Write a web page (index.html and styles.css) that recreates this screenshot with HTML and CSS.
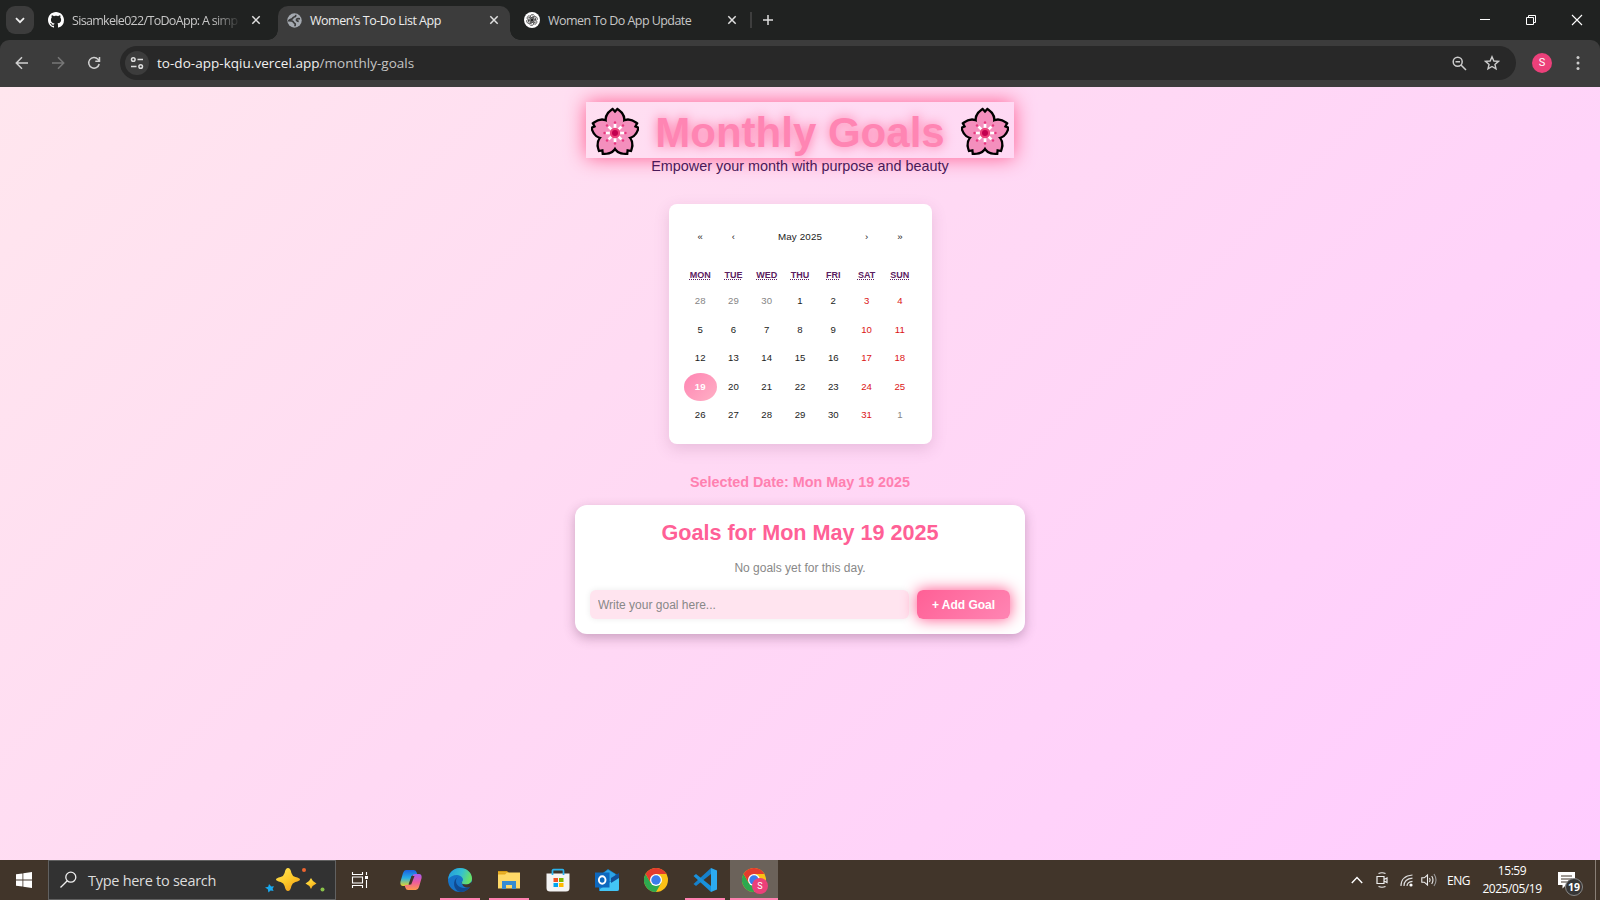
FILE: index.html
```html
<!DOCTYPE html>
<html lang="en">
<head>
<meta charset="utf-8">
<title>Women’s To-Do List App</title>
<link rel="stylesheet" href="styles.css">
</head>
<body>
<svg width="0" height="0" class="defs">
  <defs>
    <symbol id="x" viewBox="0 0 10 10"><path d="M1.3 1.3l7.4 7.4M8.7 1.3L1.3 8.7" stroke="currentColor" stroke-width="1.5" fill="none"/></symbol>
    <symbol id="chrome" viewBox="0 0 48 48">
      <circle cx="24" cy="24" r="24" fill="#fbc116"/>
      <path d="M3.200 12A24 24 0 0 0 24 48L34.400 30 24 24 13.600 30z" fill="#2da94f"/>
      <path d="M3.200 12A24 24 0 0 1 44.800 12H24L13.600 30z" fill="#e33b2e"/>
      <circle cx="24" cy="24" r="12" fill="#fff"/><circle cx="24" cy="24" r="9.500" fill="#3a7cec"/>
    </symbol>
    <path id="petal" d="M24 26L16.500 17C14.500 11 17 6.500 21.500 3.500L24 6.200 26.500 3.500C31 6.500 33.500 11 31.500 17z"/>
    <g id="petals">
      <use href="#petal"/><use href="#petal" transform="rotate(72 24 26)"/><use href="#petal" transform="rotate(144 24 26)"/>
      <use href="#petal" transform="rotate(216 24 26)"/><use href="#petal" transform="rotate(288 24 26)"/>
    </g>
    <symbol id="flower" viewBox="0 0 48 50">
      <use href="#petals" stroke="#000" stroke-width="4.600" fill="#000"/>
      <use href="#petals" fill="#f48fbd"/>
      <circle cx="24" cy="26" r="12" fill="#f48fbd"/>
      <g stroke="#fff" stroke-width="2.700"><path d="M24 17v18M15 26h18M17.600 19.600l12.800 12.800M30.400 19.600L17.600 32.400"/></g>
      <g fill="#e8387f"><circle cx="24" cy="15.500" r="1.200"/><circle cx="24" cy="36.500" r="1.200"/><circle cx="13.500" cy="26" r="1.200"/><circle cx="34.500" cy="26" r="1.200"/><circle cx="16" cy="18.500" r="1.200"/><circle cx="32" cy="18.500" r="1.200"/><circle cx="16" cy="33.500" r="1.200"/><circle cx="32" cy="33.500" r="1.200"/></g>
      <circle cx="24" cy="26" r="5.200" fill="#ec407a"/><circle cx="24" cy="26" r="3" fill="#c2004f"/>
    </symbol>
  </defs>
</svg>

<header class="tabs">
  <div class="tab-search"><svg width="10" height="7" viewBox="0 0 10 7"><path d="M1 1.200l4 4 4-4" fill="none" stroke="#eee" stroke-width="1.800"/></svg></div>
  <div class="tab tab-first">
    <svg width="16" height="16" viewBox="0 0 16 16"><path fill="#fff" d="M8 0C3.580 0 0 3.580 0 8c0 3.540 2.290 6.530 5.470 7.590.4.070.55-.17.55-.38 0-.19-.01-.82-.01-1.490-2.010.37-2.530-.49-2.690-.94-.09-.23-.48-.94-.82-1.130-.28-.15-.68-.52-.01-.53.63-.01 1.080.58 1.230.82.72 1.210 1.870.87 2.330.66.070-.52.28-.87.51-1.070-1.780-.2-3.640-.89-3.640-3.950 0-.87.31-1.590.82-2.150-.08-.2-.36-1.020.08-2.120 0 0 .67-.21 2.200.82.64-.18 1.320-.27 2-.27s1.360.09 2 .27c1.530-1.040 2.200-.82 2.200-.82.44 1.100.16 1.920.08 2.120.51.56.82 1.270.82 2.150 0 3.070-1.870 3.750-3.650 3.950.29.25.54.73.54 1.480 0 1.070-.01 1.930-.01 2.200 0 .21.15.46.55.38A8.010 8.010 0 0 0 16 8c0-4.420-3.580-8-8-8"/></svg>
    <span class="tab-title fade">Sisamkele022/ToDoApp: A simp</span>
    <svg class="close" width="10" height="10"><use href="#x"/></svg>
  </div>
  <div class="tab tab-active">
    <svg width="15" height="15" viewBox="0 0 16 16"><circle cx="8" cy="8" r="7.700" fill="#a4a9b0"/><path d="M9 2c.8 1.200 0 2.200-1.500 2.300C6 4.500 6.500 6 5 6.500S2.500 7 2 8.200c2.500 0 4.500.3 5 1.600s1.800 1 1.800 2.200-.3 1.300-.3 2M13.800 6.200c-1.500-.4-3-.4-3.600.6s.6 2 2.300 2.200" fill="none" stroke="#3c3c3c" stroke-width="1.800"/></svg>
    <span class="tab-title">Women’s To-Do List App</span>
    <svg class="close" width="10" height="10"><use href="#x"/></svg>
  </div>
  <div class="tab tab-last">
    <svg width="16" height="16" viewBox="0 0 16 16"><circle cx="8" cy="8" r="8" fill="#fff"/><g fill="none" stroke="#222" stroke-width=".7"><path id="knot" d="M6.200 7V4.800C6.200 2.300 9.300 1.800 10.500 3.600M6.200 7L8 8.100l1.900-1.100V4.900L7.700 3.700"/><use href="#knot" transform="rotate(60 8 8)"/><use href="#knot" transform="rotate(120 8 8)"/><use href="#knot" transform="rotate(180 8 8)"/><use href="#knot" transform="rotate(240 8 8)"/><use href="#knot" transform="rotate(300 8 8)"/></g></svg>
    <span class="tab-title">Women To Do App Update</span>
    <svg class="close" width="10" height="10"><use href="#x"/></svg>
  </div>
  <i class="tab-divider"></i>
  <svg class="new-tab" width="12" height="12" viewBox="0 0 12 12"><path d="M6 1v10M1 6h10" stroke="#ddd" stroke-width="1.500"/></svg>
  <div class="window-controls">
    <svg width="12" height="12" viewBox="0 0 12 12"><path d="M1 5.500h10" stroke="#fff"/></svg>
    <svg width="12" height="12" viewBox="0 0 12 12"><path d="M1.500 3.500h7v7h-7zM3.500 3V1.500h7v7H9" fill="none" stroke="#fff"/></svg>
    <svg width="12" height="12" viewBox="0 0 12 12"><path d="M1 1l10 10M11 1L1 11" stroke="#fff" stroke-width="1.100"/></svg>
  </div>
</header>

<nav class="toolbar">
  <div class="nav-buttons">
    <svg width="14" height="14" viewBox="0 0 14 14"><path d="M13 7H1.500M7 1.300L1.300 7 7 12.700" fill="none" stroke="#d0d0d0" stroke-width="1.500"/></svg>
    <svg width="14" height="14" viewBox="0 0 14 14"><path d="M1 7h11.500M7 1.300L12.700 7 7 12.700" fill="none" stroke="#777" stroke-width="1.500"/></svg>
    <svg width="14" height="14" viewBox="0 0 14 14"><path d="M12.200 8A5.300 5.300 0 1 1 11 3.300L12.500 5M12.500 1v4.200H8.300" fill="none" stroke="#d0d0d0" stroke-width="1.500"/></svg>
  </div>
  <div class="omnibox">
    <span class="site-info"><svg width="14" height="14" viewBox="0 0 14 14"><g fill="none" stroke="#ddd" stroke-width="1.500"><circle cx="3.300" cy="3.500" r="1.800"/><path d="M7.500 3.500H13M1 10.500h5.500"/><circle cx="10.700" cy="10.500" r="1.800"/></g></svg></span>
    <span class="url">to-do-app-kqiu.vercel.app<span>/monthly-goals</span></span>
    <svg class="zoom-icon" width="15" height="15" viewBox="0 0 15 15"><g fill="none" stroke="#ccc" stroke-width="1.500"><circle cx="5.700" cy="5.700" r="4.500"/><path d="M9 9l5 5M3.500 5.700H8"/></g></svg>
    <svg width="16" height="16" viewBox="0 0 16 16"><path d="M8 1.800l1.850 4.200 4.550.4-3.450 3 1.050 4.500L8 11.500l-4 2.400 1.050-4.500-3.450-3 4.550-.4z" fill="none" stroke="#ccc" stroke-width="1.400"/></svg>
  </div>
  <span class="avatar">S</span>
  <svg class="menu-dots" width="4" height="16" viewBox="0 0 4 16" fill="#ccc"><circle cx="2" cy="2.500" r="1.500"/><circle cx="2" cy="8" r="1.500"/><circle cx="2" cy="13.500" r="1.500"/></svg>
</nav>

<main class="page">
  <h1><svg width="48" height="50"><use href="#flower"/></svg><span>Monthly Goals</span><svg width="48" height="50"><use href="#flower"/></svg></h1>
  <p class="subtitle">Empower your month with purpose and beauty</p>
  <section class="calendar">
    <div class="cal-nav"><span>«</span><span>‹</span><span class="month">May 2025</span><span>›</span><span>»</span></div>
    <div class="weekdays"><abbr>MON</abbr><abbr>TUE</abbr><abbr>WED</abbr><abbr>THU</abbr><abbr>FRI</abbr><abbr>SAT</abbr><abbr>SUN</abbr></div>
    <div class="days">
      <span class="out">28</span><span class="out">29</span><span class="out">30</span><span>1</span><span>2</span><span class="we">3</span><span class="we">4</span>
      <span>5</span><span>6</span><span>7</span><span>8</span><span>9</span><span class="we">10</span><span class="we">11</span>
      <span>12</span><span>13</span><span>14</span><span>15</span><span>16</span><span class="we">17</span><span class="we">18</span>
      <span class="active">19</span><span>20</span><span>21</span><span>22</span><span>23</span><span class="we">24</span><span class="we">25</span>
      <span>26</span><span>27</span><span>28</span><span>29</span><span>30</span><span class="we">31</span><span class="out">1</span>
    </div>
  </section>
  <p class="selected">Selected Date: Mon May 19 2025</p>
  <section class="goals">
    <h2>Goals for Mon May 19 2025</h2>
    <p>No goals yet for this day.</p>
    <div class="goal-form"><input type="text" placeholder="Write your goal here..."><button>+ Add Goal</button></div>
  </section>
</main>

<footer class="taskbar">
  <div class="start"><svg width="16" height="16" viewBox="0 0 16 16" fill="#fff"><path d="M0 2.300L6.500 1.400v6.200H0zM7.300 1.200L16 0v7.600H7.300zM0 8.400h6.500v6.200L0 13.700zM7.300 8.400H16V16l-8.700-1.200z"/></svg></div>
  <div class="search">
    <svg width="18" height="18" viewBox="0 0 18 18"><g fill="none" stroke="#eee" stroke-width="1.300"><circle cx="10.800" cy="6.200" r="5"/><path d="M7.300 9.700L.5 16.500"/></g></svg>
    <span>Type here to search</span>
    <svg class="sparkles" width="62" height="26" viewBox="0 0 62 26">
      <defs><linearGradient id="gold" x2=".7" y2="1"><stop stop-color="#ffe75c"/><stop offset=".6" stop-color="#fdc828"/><stop offset="1" stop-color="#f3a01c"/></linearGradient></defs>
      <path d="M24 1q2.500 0 3.400 5 .8 3 4 4 4.600 1.100 4.600 2.500t-4.600 2.500q-3.200 1-4 4-.9 5-3.400 5t-3.400-5q-.8-3-4-4-4.600-1.100-4.600-2.500t4.600-2.500q3.200-1 4-4Q21.500 1 24 1z" fill="url(#gold)"/>
      <path d="M47 11q1.600 4 5.500 5.500-3.900 1.500-5.500 5.500-1.600-4-5.500-5.500 3.900-1.500 5.500-5.500z" fill="url(#gold)"/>
      <path d="M5 17l2.300 2.400 2.700-.2-1.400 2.600 1 2.200-3-.6-2.200 2-.6-3.200L1 20.500l3.200-.8z" fill="#18a8ee"/>
      <circle cx="40" cy="3" r="2" fill="#ef6530"/><circle cx="58.500" cy="22.500" r="2" fill="#8ac34a"/>
    </svg>
  </div>
  <div class="task-view"><svg width="17" height="16" viewBox="0 0 17 16"><path d="M1.500 0v2.500h10V0M1.500 16v-2.500h10V16M1.500 5h10v6h-10zM15.500 0v3M15.500 8v8" fill="none" stroke="#fff" stroke-width="1.100"/><path d="M14 4h3v3h-3z" fill="#fff"/></svg></div>
  <div class="apps">
    <div class="app"><svg width="24" height="24" viewBox="0 0 24 24"><defs><linearGradient id="cp1" x2="0" y2="1"><stop stop-color="#1b5fe0"/><stop offset=".5" stop-color="#27aee6"/><stop offset="1" stop-color="#e6d42b"/></linearGradient><linearGradient id="cp2" x2="0" y2="1"><stop stop-color="#a65cf0"/><stop offset=".5" stop-color="#ee5a9f"/><stop offset="1" stop-color="#ff9a4d"/></linearGradient></defs><path d="M7 2h8q2 0 2.700 2.500L18.500 7H15q-2 0-2.600 2L10.500 16Q10 18 8 18H4Q1 18 1.400 14L4 5Q5 2 7 2z" fill="url(#cp1)"/><path d="M17 22H9q-2 0-2.700-2.500L5.500 17H9q2 0 2.600-2l1.900-7Q14 6 16 6h4q3 0 2.600 4L20 19q-1 3-3 3z" fill="url(#cp2)"/><path d="M12.500 8h3l-3.300 8.500H9.500z" fill="#41352a"/></svg></div>
    <div class="app open"><svg width="24" height="24" viewBox="0 0 24 24"><defs><linearGradient id="ed" x2="1" y2=".3"><stop stop-color="#2299df"/><stop offset=".6" stop-color="#35c1cf"/><stop offset="1" stop-color="#67e06a"/></linearGradient></defs><circle cx="12" cy="12" r="12" fill="#1673c8"/><path d="M.3 11C1 4 6 0 12 0c7 0 12 5 12 10.500 0 4-3 6-6 6-4 0-5-1.500-4-2.500 3-3-1-7-5-7-4 0-7 2-8.700 4z" fill="url(#ed)"/><path d="M10 9c-4 3-2 10 5 11 3 .4 6-.5 7.500-2C20 22.500 16 24 12 24 5 22 4 12 10 9z" fill="#104a91"/><path d="M14 14c-1 1 0 2.500 4 2.500 2.500 0 4.500-1 5.600-3 .5 2 0 4-1 5.300-4 2-8.600.2-8.600-4.800z" fill="#41352a"/></svg></div>
    <div class="app open"><svg width="24" height="24" viewBox="0 0 24 24"><path d="M1 3h9l2 2H1z" fill="#d69a13"/><path d="M1 4.500h22v16H1z" fill="#ffd968"/><path d="M1 4.500h9L8 6.500H1z" fill="#e5a91e"/><path d="M5 13h14v8h-4v-4H9v4H5z" fill="#368bd2"/></svg></div>
    <div class="app"><svg width="24" height="24" viewBox="0 0 24 24"><path d="M.5 5.500h23V20q0 3.500-3.500 3.500H4Q.5 23.500.5 20z" fill="#f4f4f4"/><path d="M6.500 7V2.800Q6.500 1.700 7.500 1.700h9q1 0 1 1.100V7" fill="none" stroke="#2bb3ed" stroke-width="1.700"/><path d="M7.500 10H12v4H7.500z" fill="#f25022"/><path d="M13 10h4.500v4H13z" fill="#7fba00"/><path d="M7.500 15H12v4H7.500z" fill="#00a4ef"/><path d="M13 15h4.500v4H13z" fill="#ffb900"/></svg></div>
    <div class="app"><svg width="24" height="24" viewBox="0 0 24 24"><path d="M4 8l9-7 11 7v13q0 2-2 2H4z" fill="#1684cc"/><path d="M7 6l6-4 7 4v7H7z" fill="#2ca4e7"/><path d="M5 21l19-13v13q0 2-2 2H5z" fill="#43c5f5"/><path d="M16 10l8-5v5l-8 5z" fill="#124f98"/><path d="M0 4.500h14.500v15H0z" fill="#0d68be"/><ellipse cx="7.200" cy="12" rx="3.300" ry="3.700" fill="none" stroke="#fff" stroke-width="1.900"/></svg></div>
    <div class="app"><svg width="24" height="24"><use href="#chrome"/></svg></div>
    <div class="app open"><svg width="24" height="24" viewBox="0 0 24 24"><path d="M18 0l6 2.500v19L18 24z" fill="#2caaf0"/><path d="M18 0v6L3 18l-2.500-2z" fill="#1681cc"/><path d="M18 24v-6L3 6 .5 8z" fill="#1991dc"/></svg></div>
    <div class="app open current"><svg width="24" height="24"><use href="#chrome"/></svg><span class="badge">S</span></div>
  </div>
  <div class="tray">
    <svg class="chevron" width="12" height="8" viewBox="0 0 12 8"><path d="M.8 7L6 1.500 11.200 7" fill="none" stroke="#fff" stroke-width="1.400"/></svg>
    <svg class="meet" width="12" height="16" viewBox="0 0 12 16"><path d="M2.500 1.500q3.500-1.500 7 0M2.500 14.500q3.500 1.500 7 0M1 4.500h7v7H1zM8 7.500L11 6v4.500L8 9" fill="none" stroke="#eee" stroke-width="1.200"/></svg>
    <svg class="wifi" width="13" height="13" viewBox="0 0 13 13"><g fill="none" stroke="#ddd" stroke-width="1.200"><path d="M1 12Q1 2 12.500 1M4 12Q4 5 12.500 4.200M7 12Q7 8 12.500 7.300"/></g><circle cx="11" cy="11" r="1.600" fill="#fff"/></svg>
    <svg class="volume" width="17" height="14" viewBox="0 0 17 14"><path d="M.8 4.800h2.500L6.500 2v10L3.300 9.200H.8zM8.500 5q1.300 2 0 4M10.700 3q2.600 4 0 8" fill="none" stroke="#eee" stroke-width="1.100"/><path d="M13 1q4 6 0 12" fill="none" stroke="#999" stroke-width="1.100"/></svg>
    <span class="lang">ENG</span>
    <div class="clock"><span>15:59</span><span>2025/05/19</span></div>
    <div class="notice"><svg width="17" height="17" viewBox="0 0 17 17"><path d="M0 0h17v13H8l-3.500 3.500V13H0z" fill="#fff"/><path d="M3 4h11M3 7h11M3 10h8" stroke="#41352a"/></svg><span>19</span></div>
  </div>
  <i class="desktop-edge"></i>
</footer>
</body>
</html>
```

FILE: styles.css
```css
* { box-sizing: border-box; }
body { margin: 0; width: 1600px; height: 900px; overflow: hidden; display: flex; flex-direction: column; background: #202221; font-family: "Liberation Sans", Arial, sans-serif; }
svg { display: block; flex: none; }
h1, h2, p { margin: 0; }
.defs { position: absolute; }

/* Browser tabs */
.tabs { height: 40px; flex: none; display: flex; background: #202221; color: #c7c7c7; font: 12.500px "Open Sans", sans-serif; }
.tab-search { width: 28px; height: 28px; margin: 6px 0 0 6px; border-radius: 9px; background: #3c3c3c; display: flex; align-items: center; justify-content: center; }
.tab { height: 34px; margin-top: 6px; padding-bottom: 6px; display: flex; align-items: center; gap: 8px; white-space: nowrap; }
.tab-first { width: 244px; padding-left: 14px; padding-right: 17px; }
.tab-title { flex: 1; letter-spacing: -.55px; line-height: 20px; padding-top: 1px; }
.tab-first .tab-title { letter-spacing: -.68px; }
.fade { -webkit-mask-image: linear-gradient(90deg, #000 82%, transparent 99%); mask-image: linear-gradient(90deg, #000 82%, transparent 99%); }
.close { color: #e0e0e0; }
.tab-active { width: 232px; padding-left: 9px; padding-right: 11px; background: #3c3c3c; border-radius: 10px 10px 0 0; color: #ededed; position: relative; }
.tab-active .tab-title { letter-spacing: -.48px; }
.tab-active::before, .tab-active::after { content: ""; position: absolute; bottom: 0; width: 10px; height: 10px; }
.tab-active::before { left: -10px; background: radial-gradient(circle at 0 0, transparent 9.500px, #3c3c3c 10px); }
.tab-active::after { right: -10px; background: radial-gradient(circle at 100% 0, transparent 9.500px, #3c3c3c 10px); }
.tab-last { width: 240px; padding-left: 14px; padding-right: 13px; }
.tab-divider { width: 2px; height: 16px; margin: 12px 0 0; background: #3e3e3e; }
.new-tab { margin: 14px 0 0 10px; }
.window-controls { margin: 14px 17px 0 auto; display: flex; gap: 34px; }

/* Toolbar */
.toolbar { height: 47px; flex: none; padding-bottom: 1px; background: #3c3c3c; border-radius: 9px 9px 0 0; display: flex; align-items: center; }
.nav-buttons { display: flex; gap: 22px; padding-left: 15px; width: 120px; }
.omnibox { width: 1396px; height: 34px; padding: 0 16px 0 5px; border-radius: 17px; background: #282828; display: flex; align-items: center; }
.site-info { width: 24px; height: 24px; border-radius: 50%; background: #3c3c3c; display: flex; align-items: center; justify-content: center; }
.url { flex: 1; margin-left: 8px; color: #f0f0f0; font: 13.500px "Open Sans", sans-serif; letter-spacing: .03px; }
.url span { color: #c4c4c4; }
.zoom-icon { margin-right: 17px; }
.avatar { width: 20px; height: 20px; margin-left: 16px; border-radius: 50%; background: #ec407a; color: #fff; font: 11px/20px Roboto, sans-serif; text-align: center; }
.menu-dots { margin-left: 24px; }

/* Monthly goals page */
.page { height: 773px; flex: none; display: flex; flex-direction: column; align-items: center; padding-top: 15px; overflow: hidden; background: linear-gradient(135deg, #ffe6ee, #ffd9f4 45%, #ffccff); }
h1 { width: 428px; height: 56px; flex: none; padding: 5px 5px 0; display: flex; justify-content: space-between; color: #ff85b3; font-size: 42px; line-height: 52px; white-space: nowrap; box-shadow: 0 0 20px #ff5c8f; text-shadow: 0 0 12px #ff6f9f; }
.subtitle { height: 46px; line-height: 17px; font-size: 14.400px; color: #4a1958; white-space: nowrap; }
.calendar { width: 263px; height: 240px; flex: none; padding: 16px 15px 14px; border-radius: 8px; background: #fff; box-shadow: 0 5px 15px rgba(130, 60, 110, .18); font-size: 9.600px; color: #222; }
.cal-nav { height: 32px; display: grid; grid-template-columns: 33.280px 33.280px 1fr 33.280px 33.280px; align-items: center; text-align: center; }
.month { font-size: 9.800px; letter-spacing: .15px; }
.weekdays { height: 31px; margin-top: 7px; display: grid; grid-template-columns: repeat(7, 1fr); align-items: center; justify-items: center; color: #5c2161; font-size: 9px; font-weight: bold; }
.weekdays abbr { text-decoration: underline dotted; text-underline-offset: 1px; }
.days { display: grid; grid-template-columns: repeat(7, 1fr); grid-auto-rows: 28.600px; margin-top: -3px; text-align: center; line-height: 28.600px; }
.out { color: #858585; }
.we { color: #db1515; }
.active { color: #fff; font-weight: bold; border-radius: 50%; background: linear-gradient(135deg, #ff85b3, #ffb0c5); }
.selected { height: 61px; flex: none; padding-top: 29px; line-height: 18px; color: #ff80b0; font-size: 14.350px; font-weight: bold; white-space: nowrap; }
.goals { width: 450px; height: 129px; flex: none; padding: 15px 15px 0; border-radius: 12px; background: #fff; box-shadow: 0 4px 12px rgba(80, 30, 70, .3); text-align: center; }
.goals h2 { color: #ff6096; font-size: 21.600px; line-height: 25px; }
.goals p { margin-top: 16px; color: #888; font-size: 12px; line-height: 15px; }
.goal-form { display: flex; gap: 8px; margin-top: 14px; }
.goal-form input { width: 319px; height: 29px; padding: 0 8px; border: 0; border-radius: 6px; background: #ffe4ef; box-shadow: 0 0 6px rgba(0, 0, 0, .08); font: 12px "Liberation Sans", Arial, sans-serif; }
.goal-form input::placeholder { color: #888; }
.goal-form button { width: 93px; height: 29px; padding: 0; border: 0; border-radius: 6px; color: #fff; background: linear-gradient(135deg, #ff6096, #ff85b3); box-shadow: 0 0 15px #ff4d88; font: bold 12px "Liberation Sans", Arial, sans-serif; }

/* Taskbar */
.taskbar { height: 40px; flex: none; display: flex; align-items: center; background: #41352a; color: #fff; font-family: "Open Sans", sans-serif; }
.start { width: 48px; padding-left: 16px; }
.search { width: 288px; height: 40px; padding: 0 9px 0 11px; border: 1px solid #616161; background: #323232; display: flex; align-items: center; color: #ddd; font-size: 14.500px; }
.search span { margin-left: 10px; letter-spacing: -.28px; white-space: nowrap; }
.sparkles { margin-left: auto; }
.task-view { width: 51px; padding-left: 15px; }
.apps { display: flex; height: 40px; margin-left: -1px; }
.app { width: 49px; height: 40px; display: flex; align-items: center; justify-content: center; position: relative; }
.open::after { content: ""; position: absolute; left: 5px; right: 4px; bottom: 0; height: 2px; background: #ff80b0; }
.current { width: 48px; margin-left: 1px; background: #6b625a; }
.current::after { left: 0; right: 0; }
.badge { position: absolute; left: 22px; top: 18px; width: 16px; height: 16px; border-radius: 50%; background: #ec407a; font: 9px/16px Roboto, sans-serif; text-align: center; }
.tray { margin-left: auto; display: flex; align-items: center; }
.meet { margin-left: 13px; }
.wifi { margin-left: 12px; }
.volume { margin-left: 8px; }
.lang { margin-left: 9px; width: 24px; font-size: 12px; letter-spacing: -.5px; }
.clock { width: 62px; margin-left: 10px; display: flex; flex-direction: column; align-items: center; font-size: 12px; line-height: 18px; letter-spacing: -.45px; white-space: nowrap; }
.notice { position: relative; width: 37px; margin-left: 15px; }
.notice span { position: absolute; left: 7px; top: 6px; width: 18px; height: 18px; border-radius: 50%; border: 1px solid #888; background: #363636; font: bold 10.500px/16px "Open Sans", sans-serif; text-align: center; }
.desktop-edge { width: 5px; height: 40px; border-left: 1px solid #897f76; }
```
